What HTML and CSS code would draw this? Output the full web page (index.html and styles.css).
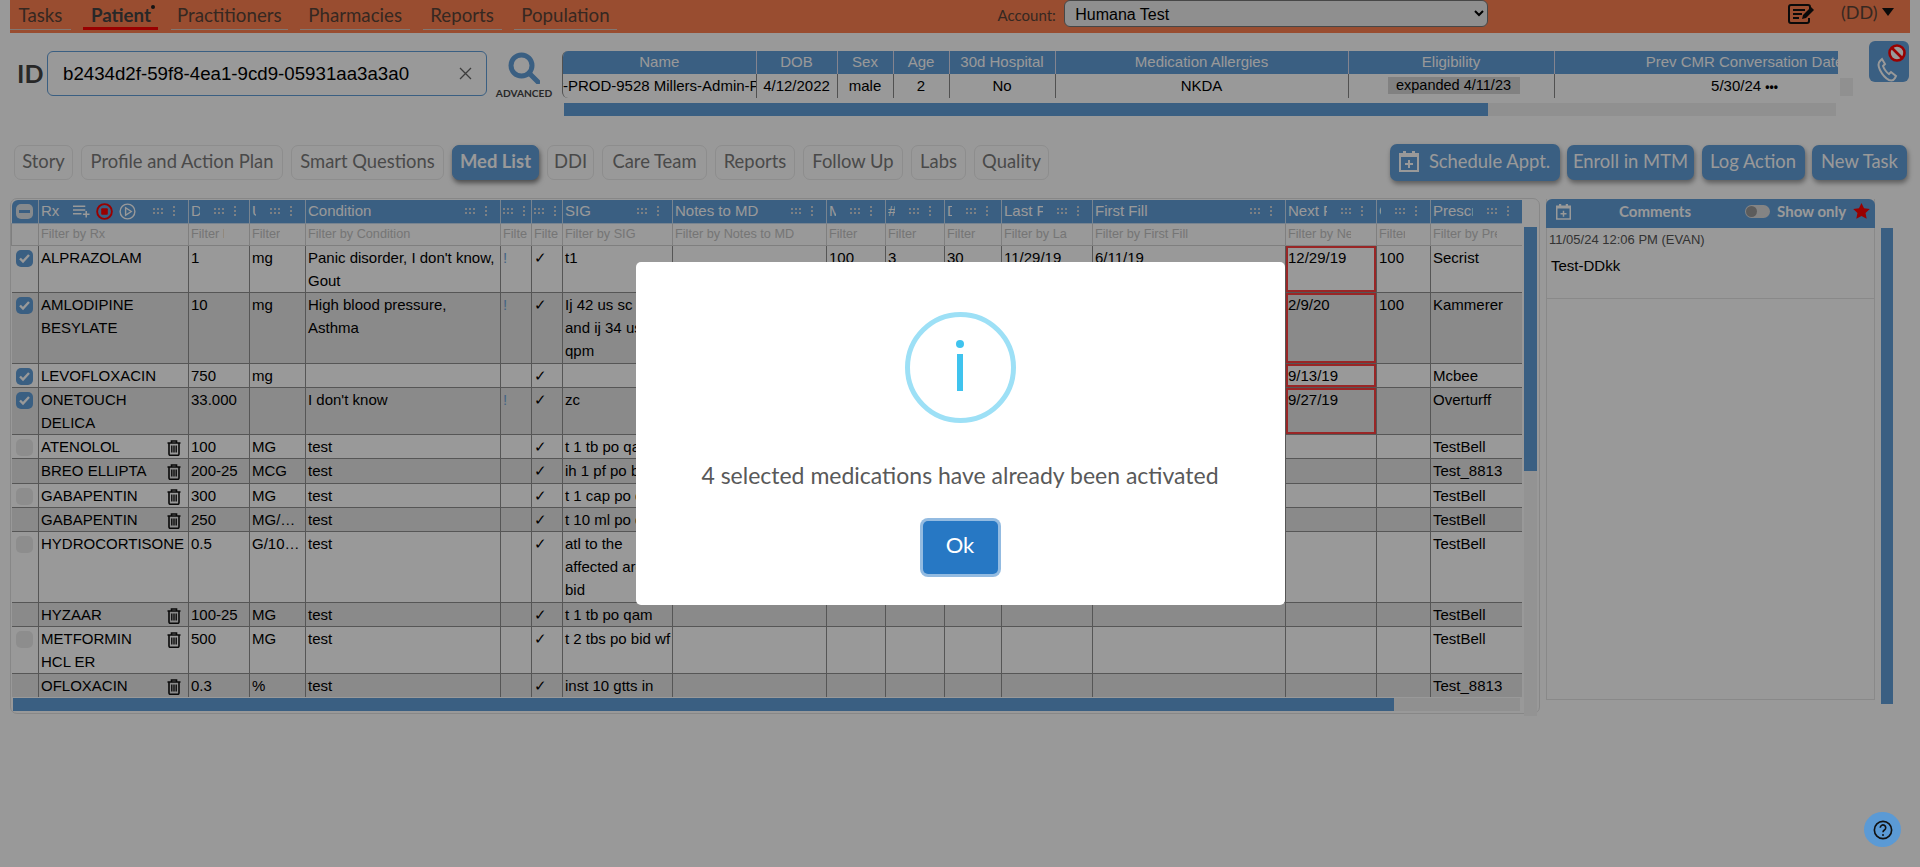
FILE: index.html
```html
<!DOCTYPE html>
<html lang="en">
<head>
  <meta charset="UTF-8" />
  <title>Med List</title>
  <link rel="stylesheet" href="styles.css">
</head>
<body>
  <svg class="defs" width="0" height="0">
    <symbol id="grip" viewBox="0 0 24 12">
      <g fill="currentColor">
        <rect x="0" y="3" width="2" height="2"/><rect x="4" y="3" width="2" height="2"/><rect x="8" y="3" width="2" height="2"/>
        <rect x="0" y="7" width="2" height="2"/><rect x="4" y="7" width="2" height="2"/><rect x="8" y="7" width="2" height="2"/>
        <rect x="20" y="1" width="2" height="2"/><rect x="20" y="5" width="2" height="2"/><rect x="20" y="9" width="2" height="2"/>
      </g>
    </symbol>
    <symbol id="trash" viewBox="0 0 14 16">
      <path d="M.5 3h13M4.500 3V1h5v2M2 3v11a1.300 1.300 0 0 0 1.300 1.300h7.400A1.300 1.300 0 0 0 12 14V3" fill="none" stroke="currentColor" stroke-width="1.600"/>
      <path d="M4.800 5.500v7M7 5.500v7M9.200 5.500v7" fill="none" stroke="currentColor" stroke-width="1.400"/>
    </symbol>
    <symbol id="check" viewBox="0 0 17 17">
      <rect width="17" height="17" rx="5" fill="currentColor"/>
      <path d="M4 8.500l3 3 6-6.500" fill="none" stroke="#fff" stroke-width="2.400"/>
    </symbol>
    <symbol id="calplus" viewBox="0 0 20 22">
      <path d="M1 4h18v17H1z" fill="none" stroke="currentColor" stroke-width="2"/>
      <path d="M1 4h18v3H1zM4 1h3v4H4zM13 1h3v4h-3z" fill="currentColor"/>
      <path d="M10 10v8M6 14h8" fill="none" stroke="currentColor" stroke-width="2"/>
    </symbol>
  </svg>

  <nav class="nav">
    <a class="nav-tab">Tasks</a>
    <a class="nav-tab active">Patient<i class="nav-dot"></i></a>
    <a class="nav-tab">Practitioners</a>
    <a class="nav-tab">Pharmacies</a>
    <a class="nav-tab">Reports</a>
    <a class="nav-tab">Population</a>
    <label class="account-label">Account:</label>
    <select class="account-select"><option>Humana Test</option></select>
    <svg class="note-icon" viewBox="0 0 27 20" width="27" height="20">
      <path d="M22 5V3a2 2 0 0 0-2-2H3a2 2 0 0 0-2 2v14a2 2 0 0 0 2 2h16a2 2 0 0 0 2-2v-3" fill="none" stroke="#111" stroke-width="2"/>
      <path d="M5 6h12M5 10h9M5 14h6" stroke="#111" stroke-width="2"/>
      <path d="M14 15l1-4 8-8 3 3-8 8z" fill="#111"/>
    </svg>
    <span class="user-menu">(DD)<i class="caret"></i></span>
  </nav>

  <section class="idrow">
    <span class="id-label">ID</span>
    <div class="id-input">
      <span>b2434d2f-59f8-4ea1-9cd9-05931aa3a3a0</span>
      <svg viewBox="0 0 13 13" width="13" height="13"><path d="M1 1l11 11M12 1L1 12" stroke="#666" stroke-width="1.300"/></svg>
    </div>
    <div class="adv-search">
      <svg viewBox="0 0 32 32" width="32" height="32">
        <circle cx="13.500" cy="13.500" r="10.500" fill="none" stroke="currentColor" stroke-width="5"/>
        <path d="M21 21l9 9" stroke="currentColor" stroke-width="5" stroke-linecap="round"/>
      </svg>
      <span>ADVANCED</span>
    </div>
    <div class="patient">
      <div class="patient-clip">
        <table class="patient-table">
          <colgroup>
            <col class="p-name"><col class="p-dob"><col class="p-sex"><col class="p-age">
            <col class="p-hosp"><col class="p-allergy"><col class="p-elig"><col class="p-prev">
          </colgroup>
          <tr>
            <th>Name</th><th>DOB</th><th>Sex</th><th>Age</th><th>30d Hospital</th>
            <th>Medication Allergies</th><th>Eligibility</th><th>Prev CMR Conversation Date</th>
          </tr>
          <tr>
            <td><div class="name-cut"><span>r-PROD-9528 Millers-Admin-Pr</span></div></td>
            <td>4/12/2022</td><td>male</td><td>2</td><td>No</td><td>NKDA</td>
            <td><span class="elig">expanded 4/11/23</span></td>
            <td>5/30/24 <b class="more">&bull;&bull;&bull;</b></td>
          </tr>
        </table>
      </div>
      <div class="hbar patient-bar"><div class="thumb"></div></div>
    </div>
    <div class="patient-stub"></div>
    <button class="phone-btn">
      <svg viewBox="0 0 26 32" width="26" height="32">
        <path d="M4 10c-2 2-2 5 0 9s5 8 9 10c3 1 5 0 6-2l1-2-5-4-2 2c-2-1-5-5-6-8l2-2-3-5z" fill="none" stroke="#fff" stroke-width="2"/>
      </svg>
      <svg class="phone-ban" viewBox="0 0 18 18" width="18" height="18">
        <circle cx="9" cy="9" r="7.500" fill="#fff" stroke="#ff0000" stroke-width="2.600"/>
        <path d="M4 4l10 10" stroke="#ff0000" stroke-width="2.600"/>
      </svg>
    </button>
  </section>

  <section class="tabs">
    <div class="tabs-left">
      <a class="tab">Story</a>
      <a class="tab">Profile and Action Plan</a>
      <a class="tab">Smart Questions</a>
      <a class="tab active">Med List</a>
      <a class="tab">DDI</a>
      <a class="tab">Care Team</a>
      <a class="tab">Reports</a>
      <a class="tab">Follow Up</a>
      <a class="tab">Labs</a>
      <a class="tab">Quality</a>
    </div>
    <div class="tabs-right">
      <a class="action schedule"><svg width="20" height="22"><use href="#calplus"/></svg>Schedule Appt.</a>
      <a class="action enroll">Enroll in MTM</a>
      <a class="action log">Log Action</a>
      <a class="action newtask">New Task</a>
    </div>
  </section>

  <main class="main">
    <div class="grid-card">
      <div class="grid-top">
        <div class="grid-clip">
          <table class="grid">
            <colgroup>
              <col class="c-sel"><col class="c-rx"><col class="c-dose"><col class="c-unit"><col class="c-cond">
              <col class="c-flag"><col class="c-flag"><col class="c-sig"><col class="c-notes"><col class="c-num">
              <col class="c-num"><col class="c-days"><col class="c-date"><col class="c-first"><col class="c-date">
              <col class="c-refill"><col class="c-presc">
            </colgroup>
            <thead>
              <tr class="head">
                <th class="sel-head"><i class="minus"></i></th>
                <th><div class="hcell"><span class="hlabel rx-label">Rx</span>
                  <svg class="rx-icon" viewBox="0 0 18 14" width="17" height="14"><path d="M0 2h13M0 6h13M0 10h9M14 7v7M10.500 10.500h7" stroke="#fff" stroke-width="1.600" fill="none"/></svg>
                  <svg class="rx-icon" viewBox="0 0 18 18" width="17" height="17"><circle cx="9" cy="9" r="7.800" fill="none" stroke="#ff0000" stroke-width="2"/><rect x="5.500" y="5.500" width="7" height="7" rx="1" fill="#ff0000"/></svg>
                  <svg class="rx-icon" viewBox="0 0 18 18" width="17" height="17"><circle cx="9" cy="9" r="7.800" fill="none" stroke="#fff" stroke-width="1.500"/><path d="M7 5l6 4-6 4z" fill="none" stroke="#fff" stroke-width="1.500"/></svg>
                  <svg class="grip" width="24" height="12"><use href="#grip"/></svg></div></th>
                <th><div class="hcell"><span class="hlabel">Dose</span><svg class="grip" width="24" height="12"><use href="#grip"/></svg></div></th>
                <th><div class="hcell"><span class="hlabel">Unit</span><svg class="grip" width="24" height="12"><use href="#grip"/></svg></div></th>
                <th><div class="hcell"><span class="hlabel">Condition</span><svg class="grip" width="24" height="12"><use href="#grip"/></svg></div></th>
                <th><div class="hcell"><span class="hlabel"></span><svg class="grip" width="24" height="12"><use href="#grip"/></svg></div></th>
                <th><div class="hcell"><span class="hlabel"></span><svg class="grip" width="24" height="12"><use href="#grip"/></svg></div></th>
                <th><div class="hcell"><span class="hlabel">SIG</span><svg class="grip" width="24" height="12"><use href="#grip"/></svg></div></th>
                <th><div class="hcell"><span class="hlabel">Notes to MD</span><svg class="grip" width="24" height="12"><use href="#grip"/></svg></div></th>
                <th><div class="hcell"><span class="hlabel">MPR</span><svg class="grip" width="24" height="12"><use href="#grip"/></svg></div></th>
                <th><div class="hcell"><span class="hlabel">#</span><svg class="grip" width="24" height="12"><use href="#grip"/></svg></div></th>
                <th><div class="hcell"><span class="hlabel">Days</span><svg class="grip" width="24" height="12"><use href="#grip"/></svg></div></th>
                <th><div class="hcell"><span class="hlabel">Last Fill</span><svg class="grip" width="24" height="12"><use href="#grip"/></svg></div></th>
                <th><div class="hcell"><span class="hlabel">First Fill</span><svg class="grip" width="24" height="12"><use href="#grip"/></svg></div></th>
                <th><div class="hcell"><span class="hlabel">Next Fill</span><svg class="grip" width="24" height="12"><use href="#grip"/></svg></div></th>
                <th><div class="hcell"><span class="hlabel">Qty</span><svg class="grip" width="24" height="12"><use href="#grip"/></svg></div></th>
                <th><div class="hcell"><span class="hlabel">Prescriber</span><svg class="grip" width="24" height="12"><use href="#grip"/></svg></div></th>
              </tr>
              <tr class="filters">
                <td></td>
                <td><input placeholder="Filter by Rx"></td>
                <td><input placeholder="Filter by Dose"></td>
                <td><input placeholder="Filter by Unit"></td>
                <td><input placeholder="Filter by Condition"></td>
                <td><input placeholder="Filter"></td>
                <td><input placeholder="Filter"></td>
                <td><input placeholder="Filter by SIG"></td>
                <td><input placeholder="Filter by Notes to MD"></td>
                <td><input placeholder="Filter by MPR"></td>
                <td><input placeholder="Filter by #"></td>
                <td><input placeholder="Filter by Days"></td>
                <td><input placeholder="Filter by Last Fill"></td>
                <td><input placeholder="Filter by First Fill"></td>
                <td><input placeholder="Filter by Next Fill"></td>
                <td><input placeholder="Filter by Qty"></td>
                <td><input placeholder="Filter by Prescriber"></td>
              </tr>
            </thead>
            <tbody>
              <tr>
                <td class="sel"><svg class="ck" width="17" height="17"><use href="#check"/></svg></td>
                <td>ALPRAZOLAM</td><td>1</td><td>mg</td><td>Panic disorder, I don't know, Gout</td>
                <td class="flag">!</td><td>✓</td><td>t1</td><td></td><td>100</td><td>3</td><td>30</td>
                <td>11/29/19</td><td>6/11/19</td><td class="late">12/29/19</td><td>100</td><td>Secrist</td>
              </tr>
              <tr>
                <td class="sel"><svg class="ck" width="17" height="17"><use href="#check"/></svg></td>
                <td>AMLODIPINE<br>BESYLATE</td><td>10</td><td>mg</td><td>High blood pressure, Asthma</td>
                <td class="flag">!</td><td>✓</td><td>Ij 42 us sc<br>and ij 34 us<br>qpm</td><td></td><td></td><td></td><td></td>
                <td></td><td></td><td class="late">2/9/20</td><td>100</td><td>Kammerer</td>
              </tr>
              <tr>
                <td class="sel"><svg class="ck" width="17" height="17"><use href="#check"/></svg></td>
                <td>LEVOFLOXACIN</td><td>750</td><td>mg</td><td></td>
                <td></td><td>✓</td><td></td><td></td><td></td><td></td><td></td>
                <td></td><td></td><td class="late">9/13/19</td><td></td><td>Mcbee</td>
              </tr>
              <tr>
                <td class="sel"><svg class="ck" width="17" height="17"><use href="#check"/></svg></td>
                <td>ONETOUCH<br>DELICA</td><td>33.000</td><td></td><td>I don't know</td>
                <td class="flag">!</td><td>✓</td><td>zc</td><td></td><td></td><td></td><td></td>
                <td></td><td></td><td class="late">9/27/19</td><td></td><td>Overturff</td>
              </tr>
              <tr>
                <td class="sel"><i class="box"></i></td>
                <td><div class="rx"><span>ATENOLOL</span><svg class="bin" width="14" height="16"><use href="#trash"/></svg></div></td>
                <td>100</td><td>MG</td><td>test</td><td></td><td>✓</td><td class="nowrap">t 1 tb po qam</td><td></td><td></td><td></td><td></td>
                <td></td><td></td><td></td><td></td><td>TestBell</td>
              </tr>
              <tr>
                <td class="sel"><i class="box"></i></td>
                <td><div class="rx"><span>BREO ELLIPTA</span><svg class="bin" width="14" height="16"><use href="#trash"/></svg></div></td>
                <td>200-25</td><td>MCG</td><td>test</td><td></td><td>✓</td><td class="nowrap">ih 1 pf po bid</td><td></td><td></td><td></td><td></td>
                <td></td><td></td><td></td><td></td><td>Test_8813</td>
              </tr>
              <tr>
                <td class="sel"><i class="box"></i></td>
                <td><div class="rx"><span>GABAPENTIN</span><svg class="bin" width="14" height="16"><use href="#trash"/></svg></div></td>
                <td>300</td><td>MG</td><td>test</td><td></td><td>✓</td><td class="nowrap">t 1 cap po qd</td><td></td><td></td><td></td><td></td>
                <td></td><td></td><td></td><td></td><td>TestBell</td>
              </tr>
              <tr>
                <td class="sel"><i class="box"></i></td>
                <td><div class="rx"><span>GABAPENTIN</span><svg class="bin" width="14" height="16"><use href="#trash"/></svg></div></td>
                <td>250</td><td class="cut">MG/100ML</td><td>test</td><td></td><td>✓</td><td class="nowrap">t 10 ml po qd</td><td></td><td></td><td></td><td></td>
                <td></td><td></td><td></td><td></td><td>TestBell</td>
              </tr>
              <tr>
                <td class="sel"><i class="box"></i></td>
                <td>HYDROCORTISONE</td>
                <td>0.5</td><td class="cut">G/100ML</td><td>test</td><td></td><td>✓</td><td>atl to the<br>affected area<br>bid</td><td></td><td></td><td></td><td></td>
                <td></td><td></td><td></td><td></td><td>TestBell</td>
              </tr>
              <tr>
                <td class="sel"><i class="box"></i></td>
                <td><div class="rx"><span>HYZAAR</span><svg class="bin" width="14" height="16"><use href="#trash"/></svg></div></td>
                <td>100-25</td><td>MG</td><td>test</td><td></td><td>✓</td><td class="nowrap">t 1 tb po qam</td><td></td><td></td><td></td><td></td>
                <td></td><td></td><td></td><td></td><td>TestBell</td>
              </tr>
              <tr>
                <td class="sel"><i class="box"></i></td>
                <td><div class="rx"><span>METFORMIN<br>HCL ER</span><svg class="bin" width="14" height="16"><use href="#trash"/></svg></div></td>
                <td>500</td><td>MG</td><td>test</td><td></td><td>✓</td><td class="nowrap">t 2 tbs po bid wf</td><td></td><td></td><td></td><td></td>
                <td></td><td></td><td></td><td></td><td>TestBell</td>
              </tr>
              <tr>
                <td class="sel"><i class="box"></i></td>
                <td><div class="rx"><span>OFLOXACIN</span><svg class="bin" width="14" height="16"><use href="#trash"/></svg></div></td>
                <td>0.3</td><td>%</td><td>test</td><td></td><td>✓</td><td class="nowrap">inst 10 gtts in</td><td></td><td></td><td></td><td></td>
                <td></td><td></td><td></td><td></td><td>Test_8813</td>
              </tr>
            </tbody>
          </table>
        </div>
        <div class="vbar"><div class="thumb"></div></div>
      </div>
      <div class="hbar grid-bar"><div class="thumb"></div></div>
    </div>

    <aside class="comments">
      <div class="comments-panel">
        <div class="comments-head">
          <svg class="cal" width="15" height="17"><use href="#calplus"/></svg>
          <b class="comments-title">Comments</b>
          <i class="toggle"></i>
          <b class="show-only">Show only</b>
          <svg viewBox="0 0 18 17" width="17" height="16"><path d="M9 0l2.700 5.600 6.100.8-4.500 4.200 1.200 6.100L9 13.800l-5.500 2.900 1.200-6.100L.2 6.400l6.100-.8z" fill="#ff0000"/></svg>
        </div>
        <div class="comment">
          <div class="comment-meta">11/05/24 12:06 PM (EVAN)</div>
          <div class="comment-text">Test-DDkk</div>
        </div>
      </div>
      <div class="comments-bar"></div>
    </aside>
  </main>

  <div class="overlay">
    <div class="modal">
      <div class="modal-icon"><i class="i-dot"></i><i class="i-bar"></i></div>
      <p class="modal-text">4 selected medications have already been activated</p>
      <button class="modal-ok">Ok</button>
    </div>
  </div>

  <button class="help">
    <svg viewBox="0 0 22 22" width="20" height="20">
      <circle cx="11" cy="11" r="9.500" fill="none" stroke="#111" stroke-width="1.800"/>
      <path d="M8 8.500a3 3 0 1 1 4.600 2.500c-1 .7-1.600 1.300-1.600 2.500" fill="none" stroke="#111" stroke-width="1.800"/>
      <circle cx="11" cy="16.500" r="1.100" fill="#111"/>
    </svg>
  </button>
</body>
</html>
```

FILE: styles.css
```css
* {
  box-sizing: border-box;
}

html, body {
  height: 100%;
}

body {
  margin: 0;
  background: #ffffff;
  color: #000000;
  font-family: "Liberation Sans", Arial, sans-serif;
  font-size: 15px;
  overflow: hidden;
}

.defs {
  position: absolute;
}

/* top nav */
.nav {
  display: flex;
  align-items: flex-start;
  gap: 12.400px;
  height: 33px;
  margin: 0 10px;
  background: #ff8150;
  font-family: Lato, sans-serif;
  font-size: 18.700px;
  color: #5a4338;
}

.nav-tab {
  position: relative;
  flex: none;
  height: 30px;
  padding-top: 2px;
  border-bottom: 1px solid #d9c8c0;
  line-height: 26px;
  text-align: center;
}

.nav-tab:nth-child(1) { width: 61px; }
.nav-tab:nth-child(2) { width: 75px; }
.nav-tab:nth-child(3) { width: 117px; }
.nav-tab:nth-child(4) { width: 110px; }
.nav-tab:nth-child(5) { width: 79px; }
.nav-tab:nth-child(6) { width: 103px; }

.nav-tab.active {
  font-weight: 700;
  border-bottom: 3px solid #ff0000;
  color: #444;
}

.nav-dot {
  position: absolute;
  top: 5px;
  right: 3px;
  width: 4px;
  height: 4px;
  border-radius: 50%;
  background: #222;
}

.account-label {
  margin-left: auto;
  font-size: 15px;
  line-height: 30px;
  margin-right: -4px;
}

.account-select {
  width: 424px;
  height: 27px;
  padding: 2px 0 0 6px;
  border: 1px solid #777;
  border-radius: 6px;
  background: #efefef;
  color: #000;
  font-family: "Liberation Sans", Arial, sans-serif;
  font-size: 16px;
}

.note-icon {
  flex: none;
  margin: 4px 0 0 287px;
}

.user-menu {
  display: flex;
  align-items: center;
  flex: none;
  gap: 4px;
  width: 54px;
  margin: 0 15px 0 14px;
  font-size: 18px;
  line-height: 24px;
}

.caret {
  flex: none;
  width: 0;
  height: 0;
  border-left: 6.500px solid transparent;
  border-right: 6.500px solid transparent;
  border-top: 8px solid #111;
}

/* id row */
.idrow {
  display: flex;
  align-items: flex-start;
  height: 76px;
  margin-top: 8px;
  padding-left: 17px;
}

.id-label {
  width: 30px;
  margin-top: 10px;
  font-family: Lato, sans-serif;
  font-weight: 700;
  font-size: 25px;
  line-height: 45px;
  color: #444;
}

.id-input {
  display: flex;
  align-items: center;
  justify-content: space-between;
  width: 440px;
  height: 45px;
  margin-top: 10px;
  padding: 0 14px 0 15px;
  border: 1px solid #619ed9;
  border-radius: 6px;
  font-size: 18.700px;
}

.adv-search {
  display: flex;
  flex-direction: column;
  align-items: center;
  width: 56px;
  margin: 11px 0 0 9px;
  color: #619ed9;
}

.adv-search span {
  margin-top: 3px;
  font-family: Lato, sans-serif;
  font-weight: 700;
  font-size: 10.200px;
  color: #444;
}

.patient {
  width: 1276px;
  margin: 10px 0 0 10px;
}

.patient-clip {
  height: 47px;
  overflow: hidden;
  border-radius: 6px 0 0 6px;
  border-left: 1px solid #888;
}

.patient-table {
  table-layout: fixed;
  width: 1372px;
  border-collapse: collapse;
  text-align: center;
}

.p-name { width: 193px; }
.p-dob { width: 81px; }
.p-sex { width: 56px; }
.p-age { width: 56px; }
.p-hosp { width: 106px; }
.p-allergy { width: 293px; }
.p-elig { width: 206px; }
.p-prev { width: 381px; }

.patient-table th {
  height: 23px;
  padding: 0 0 2px;
  background: #619ed9;
  color: #ffffff;
  font-weight: 400;
  border-right: 1px solid #dde;
}

.patient-table td {
  height: 24px;
  padding: 0 0 1px;
  border-right: 1px solid #888;
  border-bottom: 1px solid #888;
}

.name-cut {
  display: flex;
  justify-content: center;
  overflow: hidden;
  padding-left: 4px;
  white-space: nowrap;
}

.name-cut span {
  flex: none;
}

.elig {
  display: inline-block;
  width: 132px;
  height: 17px;
  margin-left: 5px;
  font-size: 14.500px;
  line-height: 17px;
  background: #d8d8d8;
}

.more {
  font-size: 12px;
}

.hbar {
  background: #f0f0f0;
}

.hbar .thumb {
  height: 100%;
  background: #619ed9;
}

.patient-bar {
  width: 1272px;
  height: 13px;
  margin: 5px 0 0 2px;
}

.patient-bar .thumb {
  width: 924px;
}

.patient-stub {
  width: 13px;
  height: 18px;
  margin: 37px 0 0 2px;
  background: #f0f0f0;
}

.phone-btn {
  position: relative;
  width: 40px;
  height: 41px;
  margin-left: 16px;
  padding: 10px 0 0;
  border: none;
  border-radius: 6px;
  background: #619ed9;
}

.phone-ban {
  position: absolute;
  top: 3px;
  right: 3px;
}

/* tabs */
.tabs {
  display: flex;
  justify-content: space-between;
  align-items: center;
  height: 37px;
  margin-top: 27px;
  padding: 0 13px 0 14px;
  font-family: Lato, sans-serif;
  font-size: 18.400px;
}

.tabs-left {
  display: flex;
  align-items: center;
  gap: 8px;
}

.tabs-right {
  display: flex;
  align-items: center;
  gap: 7.500px;
}

.tab {
  flex: none;
  height: 35px;
  border: 1px solid #ececec;
  border-radius: 7px;
  line-height: 31px;
  text-align: center;
  color: #7b7b7b;
}

.tab:nth-child(1) { width: 59px; }
.tab:nth-child(2) { width: 202px; }
.tab:nth-child(3) { width: 153px; }
.tab:nth-child(4) { width: 87px; }
.tab:nth-child(5) { width: 47px; }
.tab:nth-child(6) { width: 105px; }
.tab:nth-child(7) { width: 80px; }
.tab:nth-child(8) { width: 100px; }
.tab:nth-child(9) { width: 55px; }
.tab:nth-child(10) { width: 75px; }

.tab.active {
  background: #619ed9;
  border-color: #619ed9;
  color: #ffffff;
  font-weight: 700;
  box-shadow: 1px 3px 5px rgba(0, 0, 0, 0.5);
}

.action {
  display: flex;
  align-items: center;
  justify-content: center;
  gap: 10px;
  height: 35px;
  padding-bottom: 3px;
  border-radius: 7px;
  background: #619ed9;
  color: #ffffff;
  box-shadow: 1px 3px 5px rgba(0, 0, 0, 0.4);
}

.schedule {
  width: 170px;
  height: 37px;
}

.enroll { width: 127px; }
.log { width: 103px; }
.newtask { width: 95px; }

/* main area */
.main {
  display: flex;
  align-items: flex-start;
  margin-top: 17px;
  padding-left: 10px;
}

.grid-card {
  width: 1530px;
  height: 516px;
  padding: 1px 0 0;
  border: 1px solid #e2e2e2;
  border-radius: 7px;
}

.grid-top {
  display: flex;
  align-items: flex-start;
  height: 497px;
}

.grid-clip {
  flex: none;
  width: 1511px;
  height: 497px;
  overflow: hidden;
}

.grid {
  table-layout: fixed;
  width: 1511px;
  border-collapse: collapse;
  line-height: 23.200px;
}

.c-sel { width: 27px; }
.c-rx { width: 150px; }
.c-dose { width: 61px; }
.c-unit { width: 56px; }
.c-cond { width: 195px; }
.c-flag { width: 31px; }
.c-sig { width: 110px; }
.c-notes { width: 154px; }
.c-num { width: 59px; }
.c-days { width: 57px; }
.c-date { width: 91px; }
.c-first { width: 193px; }
.c-refill { width: 54px; }
.c-presc { width: 92px; }

.grid th {
  height: 23px;
  padding: 0;
  background: #619ed9;
  border: 1px solid #c8dcf0;
  border-top: none;
  font-weight: 400;
  color: #ffffff;
  text-align: left;
}

.grid th:first-child {
  border-radius: 6px 0 0 0;
  border-left: none;
}

.hcell {
  display: flex;
  align-items: center;
  height: 22px;
  padding-left: 2px;
  overflow: hidden;
}

.hlabel {
  flex: 1 1 0;
  min-width: 0;
  margin: 0 14px 2px 0;
  overflow: hidden;
  white-space: nowrap;
}

.hlabel:empty {
  flex: none;
  margin: 0;
}

.rx-label {
  flex: none;
  width: 32px;
  margin-right: 0;
}

.rx-icon {
  flex: none;
  margin-right: 6px;
}

.grip {
  flex: none;
  margin-right: 11px;
  color: #cfd6dc;
}

.hcell .rx-icon + .grip {
  margin-left: auto;
}

.sel-head {
  text-align: center;
}

.minus {
  display: block;
  position: relative;
  width: 17px;
  height: 15px;
  margin: 0 0 0 4px;
  border-radius: 5px;
  background: #dfe6ec;
}

.minus::after {
  content: "";
  position: absolute;
  left: 3px;
  right: 3px;
  top: 6px;
  height: 3px;
  background: #619ed9;
}

.filters td {
  height: 22px;
  padding: 0 0 0 2px;
  background: #ffffff;
  border: 1px solid #d4d4d4;
}

.filters input {
  display: block;
  width: calc(100% - 25px);
  min-width: 24px;
  height: 20px;
  padding: 0;
  border: none;
  background: transparent;
  font: 12.700px "Liberation Sans", Arial, sans-serif;
}

.filters input::placeholder {
  color: #c4c4c4;
}

.grid tbody td {
  padding: 0 2px;
  vertical-align: top;
  background: #ffffff;
  border: 1px solid #8f8f8f;
}

.grid tbody tr:nth-child(even) td {
  background: #e6e6e6;
}

.grid td.sel {
  padding: 4px 0 0 4px;
  border-left: none;
}

.ck {
  display: block;
  color: #619ed9;
}

.box {
  display: block;
  width: 17px;
  height: 17px;
  border-radius: 5px;
  background: #ececec;
}

.grid tbody tr:nth-child(even) .box {
  background: #e6e6e6;
}

.grid td.flag {
  color: #72a8dc;
}

.grid tbody td.late {
  box-shadow: inset 0 0 0 2px #ff4040;
}

.grid td.cut {
  white-space: nowrap;
  overflow: hidden;
  text-overflow: ellipsis;
}

.grid td.nowrap {
  white-space: nowrap;
  overflow: hidden;
}

.rx {
  display: flex;
  justify-content: space-between;
  align-items: flex-start;
}

.bin {
  flex: none;
  margin: 5px 5px 0 0;
  color: #111;
}

.vbar {
  flex: none;
  width: 13px;
  height: 489px;
  margin: 27px 0 0 2px;
  background: #f6f6f6;
}

.vbar .thumb {
  height: 244px;
  background: #619ed9;
}

.grid-bar {
  width: 1507px;
  height: 13px;
  margin: 1px 0 0 2px;
}

.grid-bar .thumb {
  width: 1381px;
}

/* comments */
.comments {
  display: flex;
  align-items: flex-start;
  margin-left: 6px;
}

.comments-panel {
  width: 329px;
  height: 501px;
  margin-top: 1px;
  border: 1px solid #e4e4e4;
  border-top: none;
}

.comments-head {
  display: flex;
  align-items: center;
  height: 29px;
  margin: 0 -1px;
  padding: 0 4px 5px 10px;
  border-radius: 6px 6px 0 0;
  background: #619ed9;
  color: #ffffff;
  font-family: Lato, sans-serif;
  font-size: 15px;
}

.comments-title {
  margin-left: 48px;
}

.toggle {
  position: relative;
  width: 25px;
  height: 13px;
  margin: 0 7px 0 54px;
  border-radius: 7px;
  background: #dddddd;
}

.toggle::after {
  content: "";
  position: absolute;
  left: 1px;
  top: 1px;
  width: 11px;
  height: 11px;
  border-radius: 50%;
  background: #9a9a9a;
}

.show-only {
  margin-right: 7px;
}

.comment {
  height: 71px;
  padding: 3px 2px 0;
  border-bottom: 1px solid #e4e4e4;
}

.comment-meta {
  font-size: 13px;
  line-height: 18px;
  color: #555;
}

.comment-text {
  margin: 7px 0 0 2px;
  line-height: 20px;
}

.comments-bar {
  width: 12px;
  height: 476px;
  margin: 30px 0 0 6px;
  background: #619ed9;
}

/* alert */
.overlay {
  position: fixed;
  inset: 0;
  z-index: 10;
  display: flex;
  align-items: center;
  justify-content: center;
  background: rgba(0, 0, 0, 0.4);
}

.modal {
  display: flex;
  flex-direction: column;
  align-items: center;
  width: 649px;
  height: 343px;
  padding-top: 50px;
  border-radius: 5px;
  background: #ffffff;
}

.modal-icon {
  display: flex;
  flex-direction: column;
  align-items: center;
  width: 111px;
  height: 111px;
  padding-top: 23px;
  border: 5px solid #9de0f6;
  border-radius: 50%;
}

.i-dot {
  width: 8px;
  height: 8px;
  border-radius: 50%;
  background: #3fc3ee;
}

.i-bar {
  width: 6px;
  height: 37px;
  margin-top: 6px;
  background: #3fc3ee;
}

.modal-text {
  margin: 39px 0 0;
  font-family: Lato, sans-serif;
  font-size: 23px;
  line-height: 26px;
  color: #595959;
}

.modal-ok {
  width: 75px;
  height: 53px;
  margin-top: 33px;
  padding: 0 0 7px;
  border: none;
  border-radius: 5px;
  background: #2778c4;
  box-shadow: 0 0 0 3px rgba(39, 120, 196, 0.5);
  color: #ffffff;
  font-family: Lato, sans-serif;
  font-size: 22px;
}

.help {
  position: fixed;
  right: 19px;
  bottom: 20px;
  z-index: 20;
  display: flex;
  align-items: center;
  justify-content: center;
  width: 37px;
  height: 35px;
  padding: 0;
  border: none;
  border-radius: 50%;
  background: #5b9ad5;
}
```
